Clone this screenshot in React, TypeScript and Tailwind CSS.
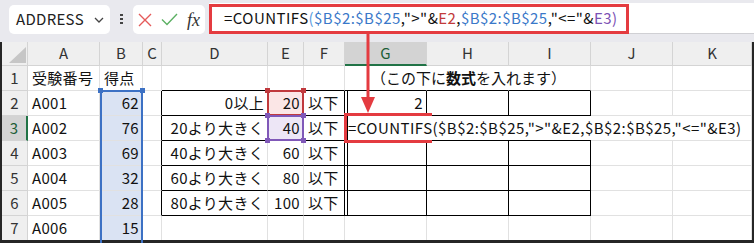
import React from 'react'

const COLS = ['A', 'B', 'C', 'D', 'E', 'F', 'G', 'H', 'I', 'J', 'K']

type Cell = { t?: React.ReactNode; right?: boolean; bg?: string }

const rows: Record<string, Cell>[] = [
  { A: { t: '受験番号' }, B: { t: '得点' } },
  { A: { t: 'A001' }, B: { t: '62', right: true }, D: { t: '0以上', right: true }, E: { t: '20', right: true }, F: { t: '以下' }, G: { t: '2', right: true } },
  { A: { t: 'A002' }, B: { t: '76', right: true }, D: { t: '20より大きく', right: true }, E: { t: '40', right: true }, F: { t: '以下' } },
  { A: { t: 'A003' }, B: { t: '69', right: true }, D: { t: '40より大きく', right: true }, E: { t: '60', right: true }, F: { t: '以下' } },
  { A: { t: 'A004' }, B: { t: '32', right: true }, D: { t: '60より大きく', right: true }, E: { t: '80', right: true }, F: { t: '以下' } },
  { A: { t: 'A005' }, B: { t: '28', right: true }, D: { t: '80より大きく', right: true }, E: { t: '100', right: true }, F: { t: '以下' } },
  { A: { t: 'A006' }, B: { t: '15', right: true } },
]

const TABLE_COLS = ['D', 'E', 'F', 'G', 'H', 'I']

function GridCell({ r, c }: { r: number; c: string }) {
  const cell = rows[r - 1][c] || {}
  const inTable = r >= 2 && r <= 6
  const blackBottom = (r === 1 || inTable) && TABLE_COLS.includes(c)
  const blackRight = inTable && ['C', 'F', 'G', 'H', 'I'].includes(c)
  const gLeft = inTable && c === 'G'

  let bg = 'bg-white'
  if (c === 'B' && r >= 2) bg = 'bg-[#dae3f3]'
  if (c === 'E' && r === 2) bg = 'bg-[#fbe6e6]'
  if (c === 'E' && r === 3) bg = 'bg-[#ede6f6]'

  return (
    <div
      className={`relative flex items-center whitespace-nowrap border-r border-b text-[15px] tracking-[0.3px] text-[#111] ${bg} ${
        blackRight ? 'border-r-black' : 'border-r-[#e1e1e1]'
      } ${blackBottom ? 'border-b-black' : 'border-b-[#e1e1e1]'} ${
        gLeft ? 'shadow-[inset_2px_0_0_#fff,inset_3px_0_0_#000]' : ''
      } ${cell.right ? 'justify-end pr-[3px]' : 'pl-[4px]'}`}
    >
      {cell.t}
      {r === 1 && c === 'G' && (
        <span className="absolute left-[26px] top-0 h-[24px] flex items-center bg-white z-10 tracking-normal">
          （この下に<b className="font-bold">数式</b>を入れます）
        </span>
      )}
      {r === 3 && c === 'G' && (
        <span className="absolute left-[3px] top-0 h-[24px] flex items-center bg-white z-10 pr-[2px] tracking-[0.45px]">
          =COUNTIFS($B$2:$B$25,"&gt;"&amp;E2,$B$2:$B$25,"&lt;="&amp;E3)
        </span>
      )}
    </div>
  )
}

function Handle({ className }: { className: string }) {
  return <div className={`absolute w-[5px] h-[5px] ${className}`} />
}

export default function App() {
  return (
    <div className="relative w-[754px] h-[243px] overflow-hidden bg-[#e9e9ee] font-['Noto_Sans_CJK_JP',sans-serif] flex flex-col">
      {/* formula bar */}
      <div className="flex items-start h-[42px] shrink-0">
        <div className="ml-[9px] mt-[5px] w-[101px] h-[29px] rounded-[5px] bg-white flex items-center justify-between pl-[7px] pr-[6px]">
          <span className="text-[15px] text-[#222] tracking-[0.3px]">ADDRESS</span>
          <svg width="10" height="6" viewBox="0 0 10 6">
            <path d="M1 1 L5 5 L9 1" fill="none" stroke="#444" strokeWidth="1.3" />
          </svg>
        </div>
        <div className="ml-[10px] mt-[14px] w-[3px] flex flex-col gap-[2px]">
          <div className="w-[3px] h-[2px] bg-[#444]" />
          <div className="w-[3px] h-[2px] bg-[#444]" />
          <div className="w-[3px] h-[2px] bg-[#444]" />
        </div>
        <div className="ml-[10px] mt-[5px] w-[72px] h-[29px] rounded-[5px] bg-white flex items-center pl-[5px]">
          <svg width="14" height="14" viewBox="0 0 14 14">
            <path d="M1 1 L13 13 M13 1 L1 13" stroke="#e55a5a" strokeWidth="1.4" />
          </svg>
          <svg className="ml-[9px]" width="17" height="13" viewBox="0 0 17 13">
            <path d="M1 6.5 L6 11.5 L16 1" fill="none" stroke="#5cb063" strokeWidth="1.4" />
          </svg>
          <span className="ml-[9px] text-[18px] italic text-[#333] font-['Liberation_Serif',serif] leading-none">fx</span>
        </div>
        <div className="ml-[4px] mt-[3px] h-[31px] flex-1 bg-white border-b border-[#d0d0d4] flex items-center pl-[15px] text-[15px] tracking-[0.45px] whitespace-nowrap text-[#111]">
          <span>=COUNTIFS</span>
          <span className="text-[#5a9be0]">(</span>
          <span className="text-[#3a78c9]">$B$2:$B$25</span>
          <span>,"&gt;"&amp;</span>
          <span className="text-[#c23a3a]">E2</span>
          <span>,</span>
          <span className="text-[#3a78c9]">$B$2:$B$25</span>
          <span>,"&lt;="&amp;</span>
          <span className="text-[#7b52b5]">E3</span>
          <span className="text-[#7b52b5]">)</span>
        </div>
      </div>

      {/* sheet */}
      <div className="flex-1 border-l-2 border-r-2 border-b-[3px] border-[#262626] bg-white overflow-hidden">
        <div className="grid grid-cols-[26px_72px_43px_19px_106px_36px_41px_82px_82px_82px_82px_1fr] grid-rows-[24px_repeat(7,25px)]">
          <div className="relative bg-[#efefef] border-r border-b border-[#d4d4d4]">
            <svg className="absolute right-[1px] bottom-[2px]" width="17" height="16" viewBox="0 0 17 16">
              <path d="M17 0 L17 16 L0 16 Z" fill="#c6c6c6" />
            </svg>
          </div>
          {COLS.map((c) =>
            c === 'G' ? (
              <div key={c} className="flex items-center justify-center bg-[#d3d3d3] border-r border-r-[#d4d4d4] border-b-2 border-b-[#217346] text-[15px] text-[#1d5e37]">
                {c}
              </div>
            ) : (
              <div key={c} className="flex items-center justify-center bg-[#efefef] border-r border-b border-[#d4d4d4] text-[15px] text-[#333]">
                {c}
              </div>
            )
          )}
          {rows.map((_, i) => {
            const r = i + 1
            return (
              <React.Fragment key={r}>
                {r === 3 ? (
                  <div className="flex items-center justify-center bg-[#d3d3d3] border-r-2 border-r-[#217346] border-b border-b-[#d4d4d4] text-[15px] text-[#1d5e37]">
                    {r}
                  </div>
                ) : (
                  <div className="flex items-center justify-center bg-[#efefef] border-r border-b border-[#d4d4d4] text-[15px] text-[#333]">
                    {r}
                  </div>
                )}
                {COLS.map((c) => (
                  <GridCell key={c} r={r} c={c} />
                ))}
              </React.Fragment>
            )
          })}
        </div>
      </div>

      {/* selections */}
      <div className="absolute left-[100px] top-[90px] w-[43px] h-[160px] border-2 border-[#3c71c4]" />
      <Handle className="left-[98px] top-[88px] bg-[#3c71c4]" />
      <Handle className="left-[140px] top-[88px] bg-[#3c71c4]" />

      <div className="absolute left-[267px] top-[90px] w-[37px] h-[26px] border-2 border-[#c0393d]" />
      <Handle className="left-[265px] top-[88px] bg-[#c0393d]" />
      <Handle className="left-[301px] top-[88px] bg-[#c0393d]" />
      <div className="absolute left-[267px] top-[115px] w-[37px] h-[26px] border-2 border-[#8058b8]" />
      <Handle className="left-[265px] top-[113px] bg-[#8058b8]" />
      <Handle className="left-[301px] top-[113px] bg-[#8058b8]" />
      <Handle className="left-[265px] top-[138px] bg-[#8058b8]" />
      <Handle className="left-[301px] top-[138px] bg-[#8058b8]" />

      {/* callouts */}
      <div className="absolute left-[209px] top-[4px] w-[420px] h-[30px] border-[3px] border-[#e43b40]" />
      <svg className="absolute left-[358px] top-[30px]" width="20" height="86" viewBox="0 0 20 86">
        <path d="M10 4 L10 70" stroke="#e43b40" strokeWidth="3" />
        <path d="M3 67 L17 67 L10 83 Z" fill="#e43b40" />
      </svg>
      <div className="absolute left-[344px] top-[113px] w-[88px] h-[30px] border-[3px] border-[#e43b40]" />
    </div>
  )
}
